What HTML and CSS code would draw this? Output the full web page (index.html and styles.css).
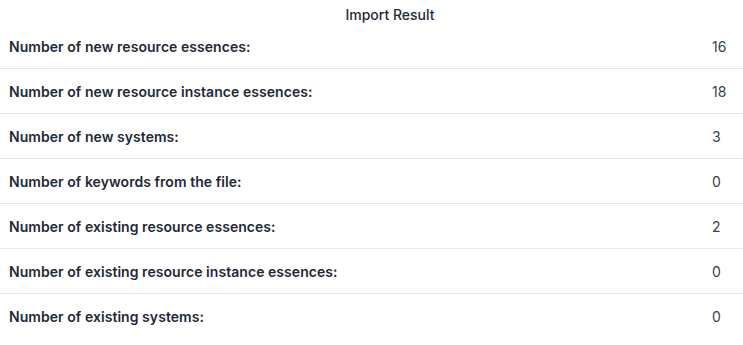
FILE: index.html
```html
<!DOCTYPE html>
<html lang="en">
  <head>
    <meta charset="UTF-8" />
    <title>Import Result</title>
    <link rel="stylesheet" href="styles.css">
  </head>
  <body>
    <div class="result">
      <div class="result-title">Import Result</div>
      <div class="result-row">
        <span class="result-label">Number of new resource essences:</span>
        <span class="result-value">16</span>
      </div>
      <div class="result-row">
        <span class="result-label">Number of new resource instance essences:</span>
        <span class="result-value">18</span>
      </div>
      <div class="result-row">
        <span class="result-label">Number of new systems:</span>
        <span class="result-value">3</span>
      </div>
      <div class="result-row">
        <span class="result-label">Number of keywords from the file:</span>
        <span class="result-value">0</span>
      </div>
      <div class="result-row">
        <span class="result-label">Number of existing resource essences:</span>
        <span class="result-value">2</span>
      </div>
      <div class="result-row">
        <span class="result-label">Number of existing resource instance essences:</span>
        <span class="result-value">0</span>
      </div>
      <div class="result-row">
        <span class="result-label">Number of existing systems:</span>
        <span class="result-value">0</span>
      </div>
    </div>
  </body>
</html>
```

FILE: styles.css
```css
* {
  margin: 0;
  padding: 0;
  box-sizing: border-box;
}

body {
  font-family: "Inter", sans-serif;
  background-color: #fff;
  color: #1f2937;
}

.result-title {
  text-align: center;
  font-size: 14px;
  font-weight: 500;
  line-height: 18px;
  padding: 6px 0 0 37px;
  height: 24px;
  color: #1f2937;
}

.result-row {
  display: grid;
  grid-template-columns: 1fr 22px;
  align-items: center;
  height: 45px;
  padding: 0 9px;
  border-bottom: 1px solid #e5e7eb;
}

.result-row:last-child {
  border-bottom: none;
}

.result-label {
  font-size: 14px;
  font-weight: 600;
  letter-spacing: 0.05px;
  color: #1f2937;
}

.result-value {
  font-size: 14px;
  color: #374151;
}
```
